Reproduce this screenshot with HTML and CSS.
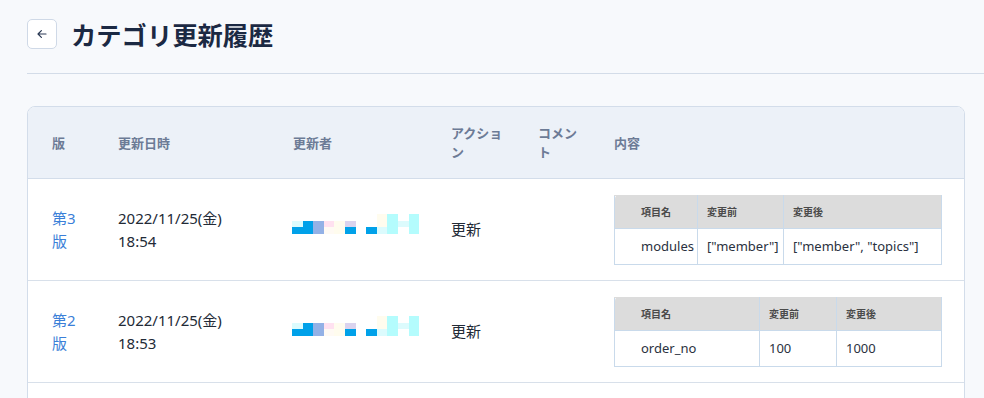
FILE: index.html
```html
<!DOCTYPE html>
<html lang="ja">
<head>
<meta charset="utf-8">
<title>カテゴリ更新履歴</title>
<link rel="stylesheet" href="styles.css">
</head>
<body>
<div class="page">
  <div class="page-head">
    <button class="back" type="button" aria-label="戻る">
      <svg width="12" height="12" viewBox="0 0 12 12"><path d="M10 6H2.2M5.4 2.6 2 6l3.4 3.4" fill="none" stroke="#2a3954" stroke-width="1.2" stroke-linecap="round" stroke-linejoin="round"/></svg>
    </button>
    <h1 class="title">カテゴリ更新履歴</h1>
  </div>
  <hr class="rule">
  <div class="card">
    <table class="history">
      <colgroup>
        <col class="c-ver"><col class="c-date"><col class="c-user"><col class="c-act"><col class="c-com"><col class="c-body">
      </colgroup>
      <thead>
        <tr>
          <th class="first">版</th>
          <th>更新日時</th>
          <th>更新者</th>
          <th>アクション</th>
          <th>コメント</th>
          <th>内容</th>
        </tr>
      </thead>
      <tbody>
        <tr>
          <td class="first"><a class="ver" href="#">第3版</a></td>
          <td class="date">2022/11/25(金)<br>18:54</td>
          <td>
            <div class="mosaic">
              <span></span><span></span><span></span><span></span><span></span><span></span><span></span><span></span><span class="m-c"></span><span class="m-y"></span><span></span><span class="m-y"></span>
              <span class="m-z"></span><span class="m-b"></span><span class="m-p"></span><span class="m-k"></span><span class="m-c"></span><span class="m-l"></span><span></span><span></span><span class="m-c"></span><span class="m-y"></span><span class="m-z"></span><span class="m-y"></span>
              <span class="m-b"></span><span class="m-b"></span><span class="m-p"></span><span class="m-c2"></span><span class="m-c"></span><span class="m-b"></span><span></span><span class="m-b"></span><span class="m-z"></span><span class="m-y"></span><span></span><span class="m-y"></span>
            </div>
          </td>
          <td>更新</td>
          <td></td>
          <td class="body">
            <table class="diff">
              <colgroup><col class="d1-a"><col class="d1-b"><col class="d1-c"></colgroup>
              <thead><tr><th>項目名</th><th>変更前</th><th>変更後</th></tr></thead>
              <tbody><tr><td>modules</td><td>["member"]</td><td>["member", "topics"]</td></tr></tbody>
            </table>
          </td>
        </tr>
        <tr>
          <td class="first"><a class="ver" href="#">第2版</a></td>
          <td class="date">2022/11/25(金)<br>18:53</td>
          <td>
            <div class="mosaic">
              <span></span><span></span><span></span><span></span><span></span><span></span><span></span><span></span><span class="m-c"></span><span class="m-y"></span><span></span><span class="m-y"></span>
              <span class="m-z"></span><span class="m-b"></span><span class="m-p"></span><span class="m-k"></span><span class="m-c"></span><span class="m-l"></span><span></span><span></span><span class="m-c"></span><span class="m-y"></span><span class="m-z"></span><span class="m-y"></span>
              <span class="m-b"></span><span class="m-b"></span><span class="m-p"></span><span class="m-c2"></span><span class="m-c"></span><span class="m-b"></span><span></span><span class="m-b"></span><span class="m-z"></span><span class="m-y"></span><span></span><span class="m-y"></span>
            </div>
          </td>
          <td>更新</td>
          <td></td>
          <td class="body">
            <table class="diff">
              <colgroup><col class="d2-a"><col class="d2-b"><col class="d2-c"></colgroup>
              <thead><tr><th>項目名</th><th>変更前</th><th>変更後</th></tr></thead>
              <tbody><tr><td>order_no</td><td>100</td><td>1000</td></tr></tbody>
            </table>
          </td>
        </tr>
        <tr class="spacer"><td colspan="6"></td></tr>
      </tbody>
    </table>
  </div>
</div>
</body>
</html>
```

FILE: styles.css
```css
* { box-sizing: border-box; }

html, body {
  margin: 0;
  background: #f7f9fc;
  font-family: "Noto Sans", "Noto Sans CJK JP", sans-serif;
  color: #1f2a3c;
}

.page {
  padding: 19px 19px 0 27px;
}

.page-head {
  display: flex;
  align-items: center;
  gap: 14px;
  height: 30px;
}

.back {
  width: 30px;
  height: 30px;
  padding: 0;
  display: flex;
  align-items: center;
  justify-content: center;
  background: #fff;
  border: 1px solid #cfd9e7;
  border-radius: 5px;
}

.title {
  margin: 0;
  font-family: "Noto Sans CJK JP", sans-serif;
  font-size: 25.3px;
  font-weight: 700;
  line-height: 30px;
  color: #1b2943;
}

.rule {
  margin: 24px 0 0;
  border: 0;
  border-top: 1px solid #d3dce8;
  margin-right: -19px;
}

.card {
  margin-top: 32px;
  background: #fff;
  border: 1px solid #d3ddea;
  border-radius: 8px;
  overflow: hidden;
  height: 300px;
}

.history {
  width: 100%;
  border-collapse: collapse;
  table-layout: fixed;
}

.c-ver { width: 78px; }
.c-date { width: 175px; }
.c-user { width: 158px; }
.c-act { width: 87px; }
.c-com { width: 76px; }
.c-body { width: 362px; }

.history > thead > tr > th {
  height: 71px;
  padding: 0 16px 0 12px;
  background: #ecf1f8;
  border-bottom: 1px solid #d3ddea;
  text-align: left;
  font-family: "Noto Sans CJK JP", sans-serif;
  font-size: 13px;
  font-weight: 700;
  line-height: 19px;
  color: #6c7b96;
  vertical-align: middle;
}

.history > tbody > tr > td {
  padding: 16px 16px 15px 12px;
  border-bottom: 1px solid #d8e0ea;
  font-size: 15px;
  line-height: 23px;
  color: #222a36;
  vertical-align: middle;
}

.history > thead > tr > th.first,
.history > tbody > tr > td.first {
  padding-left: 24px;
  padding-right: 20px;
}

.history > tbody > tr > td.body {
  padding-right: 23px;
}

.history > tbody > tr.spacer > td {
  border-bottom: 0;
  height: 20px;
}

.ver {
  color: #3b7fd8;
  text-decoration: none;
}

.mosaic {
  display: grid;
  grid-template-columns: repeat(12, 10.6px);
  grid-template-rows: repeat(3, 6.67px);
  width: 127px;
  margin-left: -1px;
  margin-bottom: 11px;
}

.m-b { background: #00a1e9; }
.m-p { background: #93b1e6; }
.m-k { background: #ffe1f0; }
.m-c { background: #fffcee; }
.m-c2 { background: #fffaf4; }
.m-l { background: #dad3ee; }
.m-y { background: #b4fcfd; }
.m-z { background: #dcfbfd; }

.diff {
  width: 327px;
  border-collapse: collapse;
  table-layout: fixed;
}

.d1-a { width: 83px; }
.d1-b { width: 86px; }
.d1-c { width: 158px; }
.d2-a { width: 145px; }
.d2-b { width: 77px; }
.d2-c { width: 105px; }

.diff th,
.diff td {
  border: 1px solid #c9daeb;
  padding: 0 4px 0 9px;
  text-align: left;
  white-space: nowrap;
}

.diff th {
  height: 33px;
  background: #dcdcdc;
  font-family: "Noto Sans CJK JP", sans-serif;
  font-size: 10px;
  font-weight: 700;
  color: #4a4a4a;
  border-top-color: #dcdcdc;
}

.diff th:first-child { border-top-left-radius: 4px; }
.diff th:last-child { border-top-right-radius: 4px; }

.diff td {
  height: 36px;
  font-size: 13px;
  color: #2a3140;
}

.diff th:first-child,
.diff td:first-child {
  padding-left: 26px;
}
```
